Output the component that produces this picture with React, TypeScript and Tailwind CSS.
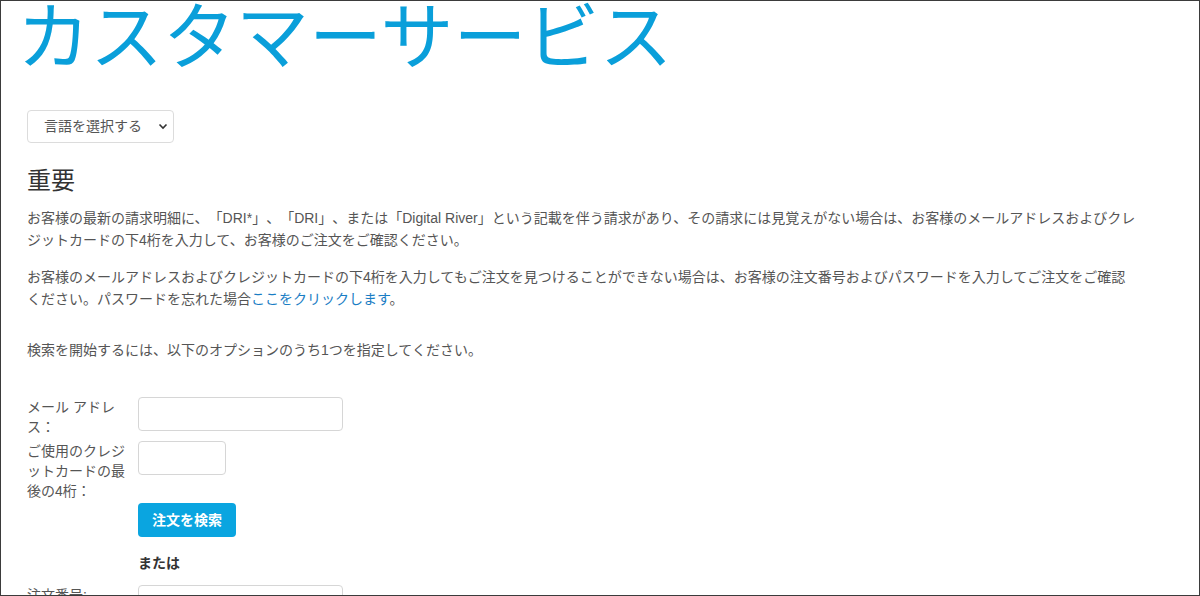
import { useState } from 'react';

const FONT = '"Liberation Sans", "Noto Sans CJK JP", sans-serif';

function Field({ label, inputWidth }: { label: string; inputWidth: string }) {
  return (
    <div className="flex items-start gap-[11px]">
      <label className="w-[100px] shrink-0 text-[14px] leading-[20px] text-[#555]">{label}</label>
      <input
        type="text"
        className={`${inputWidth} h-[34px] rounded-[4px] border border-[#d6d6d6] bg-white px-2 outline-none`}
      />
    </div>
  );
}

export default function App() {
  const [lang, setLang] = useState('');

  return (
    <div
      className="h-[596px] overflow-hidden border border-[#3b3b3b] bg-white pl-[26px] text-[#555] [text-spacing-trim:space-all]"
      style={{ fontFamily: FONT }}
    >
      {/* Page title */}
      <h1 className="-ml-[10px] text-[73px] leading-[74px] font-normal text-[#0a9fda]">カスタマーサービス</h1>

      {/* Language selector */}
      <div className="relative mt-[35px] w-[147px]">
        <select
          value={lang}
          onChange={(e) => setLang(e.target.value)}
          className="h-[33px] w-[147px] appearance-none rounded-[4px] border border-[#dcdcdc] bg-white pl-[16px] text-[14px] text-[#555] outline-none"
          style={{ fontFamily: FONT }}
        >
          <option value="">言語を選択する</option>
          <option value="en">English</option>
          <option value="ja">日本語</option>
        </select>
        <svg
          className="pointer-events-none absolute right-[6px] top-[13px]"
          width="10"
          height="7"
          viewBox="0 0 10 7"
          fill="none"
        >
          <path d="M1.5 1.5 5 5l3.5-3.5" stroke="#333" strokeWidth="1.6" />
        </svg>
      </div>

      {/* Important notice */}
      <h2 className="mt-[24px] text-[24px] leading-[27px] text-[#333]">重要</h2>

      <div className="w-[1112px] text-[14px] leading-[22px]">
        <p className="mt-[13px]">
          お客様の最新の請求明細に、「DRI*」、「DRI」、または「Digital River」という記載を伴う請求があり、その請求には見覚えがない場合は、お客様のメールアドレスおよびクレジットカードの下4桁を入力して、お客様のご注文をご確認ください。
        </p>
        <p className="mt-[15px]">
          お客様のメールアドレスおよびクレジットカードの下4桁を入力してもご注文を見つけることができない場合は、お客様の注文番号およびパスワードを入力してご注文をご確認ください。パスワードを忘れた場合
          <a href="#" className="text-[#1a7dc4]">ここをクリックします</a>。
        </p>
        <p className="mt-[29px]">検索を開始するには、以下のオプションのうち1つを指定してください。</p>
      </div>

      {/* Search form */}
      <div className="mt-[36px] flex flex-col">
        <Field label="メール アドレス：" inputWidth="w-[205px]" />
        <div className="mt-[4px]">
          <Field label="ご使用のクレジットカードの最後の4桁：" inputWidth="w-[88px]" />
        </div>
        <div className="mt-[2px] pl-[111px]">
          <button className="h-[34px] rounded-[4px] bg-[#0aa5e0] px-[14px] text-[14px] font-bold text-white">
            注文を検索
          </button>
          <div className="mt-[16px] text-[14px] leading-[20px] font-bold text-[#333]">または</div>
        </div>
        <div className="mt-[12px]">
          <Field label="注文番号:" inputWidth="w-[205px]" />
        </div>
      </div>
    </div>
  );
}
